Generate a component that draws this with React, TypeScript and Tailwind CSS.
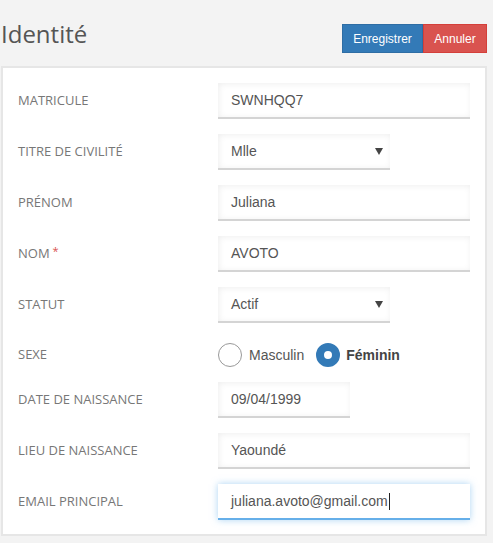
import React from 'react';

const fieldBox =
  'h-[36px] flex items-center pl-[13px] bg-white border-b-2 border-[#d4d4d4] shadow-[inset_1px_1px_6px_rgba(0,0,0,0.07)] text-[14px] text-[#555] font-["Liberation_Sans",Arial,sans-serif]';

function Label({ text, required }: { text: string; required?: boolean }) {
  return (
    <div className="w-[200px] shrink-0 text-[13px] text-[#777] font-['Open_Sans',sans-serif] uppercase">
      {text}
      {required && <sup className="text-[#d9534f] text-[11px] ml-[3px] relative top-[-3px]">*</sup>}
    </div>
  );
}

function TextField({ label, value, width = 'w-[252px]', required }: { label: string; value: string; width?: string; required?: boolean }) {
  return (
    <div className="flex items-center">
      <Label text={label} required={required} />
      <div className={`${fieldBox} ${width}`}>{value}</div>
    </div>
  );
}

function SelectField({ label, value }: { label: string; value: string }) {
  return (
    <div className="flex items-center">
      <Label text={label} />
      <div className={`${fieldBox} w-[172px] justify-between pr-[7px]`}>
        <span>{value}</span>
        <svg width="8" height="7" viewBox="0 0 8 7">
          <polygon points="0,0 8,0 4,7" fill="#444" />
        </svg>
      </div>
    </div>
  );
}

export default function App() {
  return (
    <div className="min-h-screen bg-[#f3f3f3] pl-[1px] pr-[6px] font-['Open_Sans',sans-serif]">
      <div className="flex justify-between items-start h-[66px] pt-[16px]">
        <h1 className="text-[24px] leading-[36px] text-[#555] font-normal">Identité</h1>
        <div className="flex mt-[8px] font-['Liberation_Sans',Arial,sans-serif] text-[12px] text-white">
          <button className="h-[29px] w-[81px] bg-[#337ab7] border border-[#2e6da4]">Enregistrer</button>
          <button className="h-[29px] w-[64px] bg-[#d9534f] border border-[#d43f3a]">Annuler</button>
        </div>
      </div>

      <div className="bg-white border-2 border-[#e6e6e6] pl-[15px] pt-[15px] pb-[14px] flex flex-col gap-[15px]">
        <TextField label="Matricule" value="SWNHQQ7" />
        <SelectField label="Titre de civilité" value="Mlle" />
        <TextField label="Prénom" value="Juliana" />
        <TextField label="Nom" value="AVOTO" required />
        <SelectField label="Statut" value="Actif" />

        <div className="flex items-center pt-[5px]">
          <Label text="Sexe" />
          <div className="flex items-center font-['Liberation_Sans',Arial,sans-serif] text-[14px]">
            <span className="w-[24px] h-[24px] rounded-full border border-[#999] bg-white" />
            <span className="ml-[7px] text-[#555]">Masculin</span>
            <span className="ml-[12px] w-[24px] h-[24px] rounded-full border-[8px] border-[#337ab7] bg-white" />
            <span className="ml-[6px] font-bold text-[#444]">Féminin</span>
          </div>
        </div>

        <TextField label="Date de naissance" value="09/04/1999" width="w-[132px]" />
        <TextField label="Lieu de naissance" value="Yaoundé" />

        <div className="flex items-center">
          <Label text="Email principal" />
          <div className="h-[36px] w-[252px] flex items-center pl-[13px] bg-white border-b-2 border-[#66afe9] shadow-[0_0_7px_rgba(102,175,233,0.55)] text-[14px] text-[#555] font-['Liberation_Sans',Arial,sans-serif]">
            juliana.avoto@gmail.com
            <span className="w-[1px] h-[17px] bg-[#222] ml-[1px]" />
          </div>
        </div>
      </div>
    </div>
  );
}
